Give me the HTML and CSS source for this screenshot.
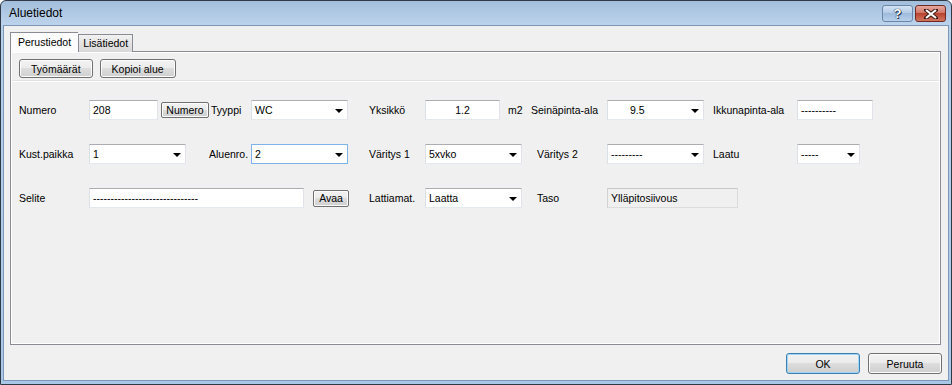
FILE: index.html
```html
<!DOCTYPE html>
<html lang="fi">
<head>
<meta charset="UTF-8" />
<title>Aluetiedot</title>
<link rel="stylesheet" href="styles.css">
</head>
<body>

<div class="window">
  <div class="titlebar">
    <span class="title">Aluetiedot</span>
    <div class="caption-buttons">
      <span class="cap-btn help">?</span>
      <span class="cap-btn close">
        <svg width="14" height="10" viewBox="0 0 14 10"><path d="M2 1 L12 9 M12 1 L2 9" stroke="#3a1a16" stroke-width="4" stroke-linecap="square"/><path d="M2 1 L12 9 M12 1 L2 9" stroke="#fff" stroke-width="2.2"/></svg>
      </span>
    </div>
  </div>

  <div class="client">
    <div class="tabs">
      <span class="tab active">Perustiedot</span>
      <span class="tab">Lisätiedot</span>
    </div>

    <div class="tabpage">
      <div class="toolbar">
        <button class="btn">Työmäärät</button>
        <button class="btn">Kopioi alue</button>
      </div>

      <div class="form">
        <div class="row">
          <label class="lbl w70">Numero</label>
          <div class="box w69">208</div>
          <button class="btn small w48 ml3">Numero</button>
          <label class="lbl w40 ml2">Tyyppi</label>
          <div class="combo w97"><span>WC</span><i class="arrow"></i></div>
          <label class="lbl w56 ml21">Yksikkö</label>
          <div class="box w75 center">1.2</div>
          <label class="lbl w23 ml8">m2</label>
          <label class="lbl w76">Seinäpinta-ala</label>
          <div class="combo w97 pad22"><span>9.5</span><i class="arrow"></i></div>
          <label class="lbl w84 ml9">Ikkunapinta-ala</label>
          <div class="box w76">----------</div>
        </div>

        <div class="row">
          <label class="lbl w70">Kust.paikka</label>
          <div class="combo w97"><span>1</span><i class="arrow"></i></div>
          <label class="lbl w42 ml23">Aluenro.</label>
          <div class="combo w97 focused"><span>2</span><i class="arrow"></i></div>
          <label class="lbl w56 ml21">Väritys 1</label>
          <div class="combo w97"><span>5xvko</span><i class="arrow"></i></div>
          <label class="lbl w70 ml15">Väritys 2</label>
          <div class="combo w97"><span>---------</span><i class="arrow"></i></div>
          <label class="lbl w84 ml9">Laatu</label>
          <div class="combo w63"><span>-----</span><i class="arrow"></i></div>
        </div>

        <div class="row">
          <label class="lbl w70">Selite</label>
          <div class="box w215">------------------------------</div>
          <button class="btn small w36 ml9 tall">Avaa</button>
          <label class="lbl w56 ml20">Lattiamat.</label>
          <div class="combo w97"><span>Laatta</span><i class="arrow"></i></div>
          <label class="lbl w70 ml15">Taso</label>
          <div class="box w131 readonly">Ylläpitosiivous</div>
        </div>
      </div>
    </div>

    <div class="footer">
      <button class="btn dialog default">OK</button>
      <button class="btn dialog">Peruuta</button>
    </div>
  </div>
</div>

</body>
</html>
```

FILE: styles.css
```css
* {
  box-sizing: border-box;
}
html, body {
  margin: 0;
}
body {
  width: 952px;
  height: 385px;
  font-family: "Liberation Sans", Arial, sans-serif;
  font-size: 10.5px;
  color: #000;
  background: #fff;
  overflow: hidden;
}
.window {
  width: 952px;
  height: 385px;
  border: 1px solid #2e3a46;
  border-radius: 6px 6px 0 0;
  background: linear-gradient(#a3bedb, #bcd3ec 24px, #b7d1ec 24px, #a9c8e8);
  display: flex;
  flex-direction: column;
  padding: 0 2px 3px 2px;
}
.titlebar {
  height: 24px;
  display: flex;
  align-items: flex-start;
  justify-content: space-between;
  padding-left: 6px;
}
.title {
  font-size: 12px;
  line-height: 24px;
}
.caption-buttons {
  display: flex;
  gap: 2px;
  margin-top: 4px;
  margin-right: 3px;
}
.cap-btn {
  width: 31px;
  height: 17px;
  border-radius: 3px;
  display: flex;
  align-items: center;
  justify-content: center;
}
.help {
  border: 1px solid #6a86a8;
  background: linear-gradient(#d4e3f3, #b1c9e4 50%, #9fbbdc 50%, #b7d0ea);
  color: #fff;
  font-weight: bold;
  font-size: 13px;
  text-shadow: 0 0 1px #2a3c55, 0 0 1px #2a3c55, 1px 1px 0 #2a3c55;
}
.close {
  width: 31px;
  border: 1px solid #6e2a22;
  background: linear-gradient(#e5a89d, #cf7262 50%, #b9432f 50%, #d2765f);
}
.client {
  flex: 1;
  background: #f0f0f0;
  border: 1px solid #7c98b6;
  padding: 6px 7px 0 6px;
  display: flex;
  flex-direction: column;
}
.tabs {
  display: flex;
  align-items: flex-end;
  height: 20px;
  margin-bottom: -1px;
  position: relative;
  z-index: 1;
}
.tab {
  height: 18px;
  padding: 2px 4px 0 4px;
  border: 1px solid #898c95;
  border-bottom: none;
  background: linear-gradient(#f2f2f2, #e3e3e3 50%, #d9d9d9);
}
.tab.active {
  height: 20px;
  padding: 3px 7px 0 7px;
  background: #fcfcfc;
  border-right: none;
}
.tabpage {
  height: 294px;
  border: 1px solid #898c95;
  background: #f0f0f0;
  box-shadow: inset 1px 1px 0 #fff, inset -1px -1px 0 #fff;
  display: flex;
  flex-direction: column;
}
.toolbar {
  display: flex;
  gap: 7px;
  padding: 7px 7px 0 7px;
  height: 29px;
  margin: 0 1px;
  border-bottom: 1px solid #e2e2e2;
  box-shadow: 0 1px 0 #fff;
}
.toolbar .btn {
  height: 19px;
  padding: 0 11px;
}
.btn {
  font-family: inherit;
  font-size: 10.5px;
  color: #000;
  border: 1px solid #707070;
  border-radius: 3px;
  background: linear-gradient(#f2f2f2, #ebebeb 50%, #dddddd 50%, #cfcfcf);
  box-shadow: inset 0 0 0 1px #fcfcfc;
  padding: 0;
  margin: 0;
}
.btn.small {
  height: 16px;
  line-height: 13px;
  border-radius: 2px;
}
.btn.tall {
  height: 17px;
}
.form {
  padding: 19px 0 0 8px;
  display: flex;
  flex-direction: column;
  gap: 24px;
}
.row {
  display: flex;
  align-items: center;
  height: 20px;
}
.lbl {
  flex: none;
  white-space: nowrap;
}
.box, .combo {
  flex: none;
  height: 20px;
  background: #fff;
  border: 1px solid;
  border-color: #abadb3 #e2e3ea #e3e9ef #dbdfe6;
  padding: 0 3px;
  line-height: 18px;
  white-space: nowrap;
  overflow: hidden;
}
.combo {
  display: flex;
  align-items: center;
  justify-content: space-between;
  padding-right: 0;
}
.combo span {
  line-height: 18px;
}
.combo.pad22 {
  padding-left: 22px;
}
.combo.focused {
  border: 1px solid #7eb4ea;
}
.arrow {
  width: 17px;
  height: 18px;
  display: flex;
  align-items: center;
  justify-content: center;
}
.arrow::before {
  content: "";
  width: 0;
  height: 0;
  border-left: 4px solid transparent;
  border-right: 4px solid transparent;
  border-top: 4px solid #000;
  margin-top: 1px;
}
.box.center {
  text-align: center;
}
.box.readonly {
  background: #f0f0f0;
  border-color: #c9c9c9 #dcdcdc #dcdcdc #d2d2d2;
}
.footer {
  display: flex;
  justify-content: flex-end;
  gap: 8px;
  padding-top: 8px;
  margin-right: -1px;
}
.btn.dialog {
  width: 74px;
  height: 21px;
}
.btn.default {
  border-color: #3c7fb1;
  box-shadow: inset 0 0 0 1px #9fd5f5;
}

.w23 { width: 23px; }
.w36 { width: 36px; }
.w40 { width: 40px; }
.w42 { width: 42px; }
.w48 { width: 48px; }
.w56 { width: 56px; }
.w63 { width: 63px; }
.w69 { width: 69px; }
.w70 { width: 70px; }
.w75 { width: 75px; }
.w76 { width: 76px; }
.w84 { width: 84px; }
.w97 { width: 97px; }
.w131 { width: 131px; }
.w215 { width: 215px; }
.ml2 { margin-left: 2px; }
.ml3 { margin-left: 3px; }
.ml8 { margin-left: 8px; }
.ml9 { margin-left: 9px; }
.ml15 { margin-left: 15px; }
.ml20 { margin-left: 20px; }
.ml21 { margin-left: 21px; }
.ml23 { margin-left: 23px; }
```
